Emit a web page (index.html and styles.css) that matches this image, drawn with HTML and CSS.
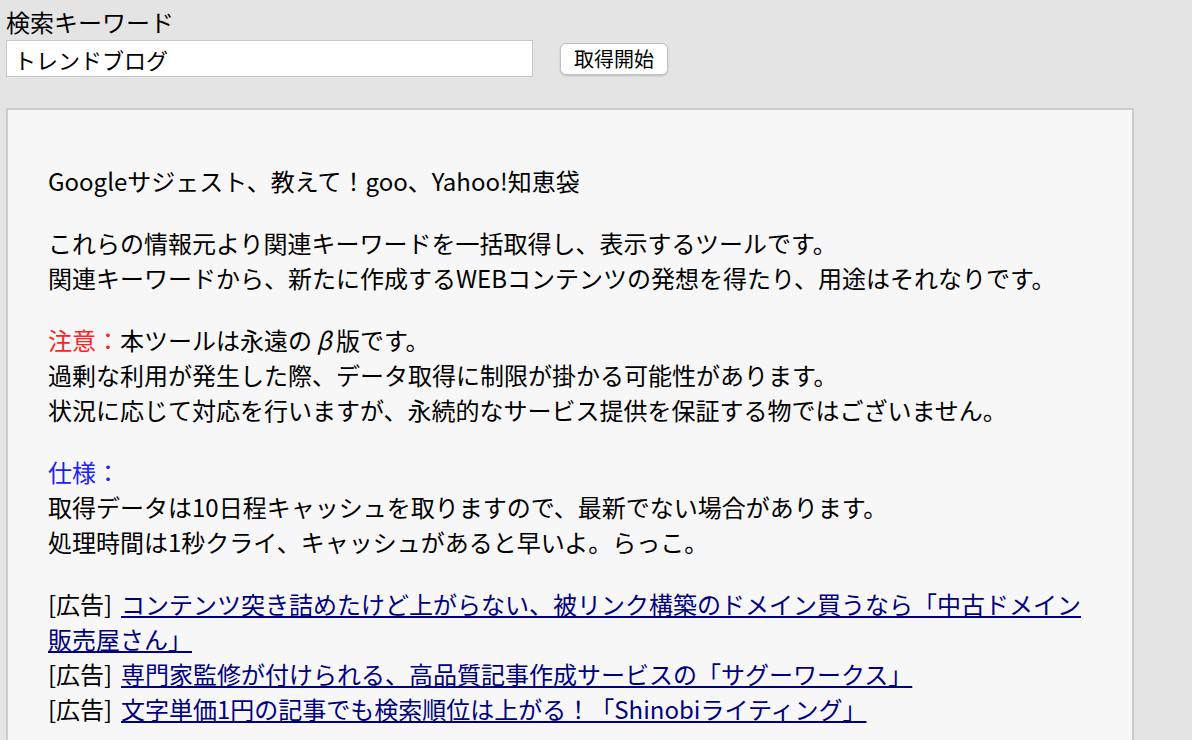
FILE: index.html
```html
<!DOCTYPE html>
<html lang="ja">
<head>
<meta charset="utf-8">
<title>関連キーワード取得ツール</title>
<link rel="stylesheet" href="styles.css">
</head>
<body>
<form class="search">
  <div class="label">検索キーワード</div>
  <div class="search-row">
    <input class="keyword" type="text" value="トレンドブログ">
    <button class="btn" type="button">取得開始</button>
  </div>
</form>
<div class="info">
  <p class="lead">Googleサジェスト、教えて！goo、Yahoo!知恵袋</p>
  <p>これらの情報元より関連キーワードを一括取得し、表示するツールです。<br>関連キーワードから、新たに作成するWEBコンテンツの発想を得たり、用途はそれなりです。</p>
  <p><span class="warn">注意：</span>本ツールは永遠の<span class="beta">β</span>版です。<br>過剰な利用が発生した際、データ取得に制限が掛かる可能性があります。<br>状況に応じて対応を行いますが、永続的なサービス提供を保証する物ではございません。</p>
  <p><span class="spec">仕様：</span><br>取得データは10日程キャッシュを取りますので、最新でない場合があります。<br>処理時間は1秒クライ、キャッシュがあると早いよ。らっこ。</p>
  <p class="ads"><span class="tag">[広告]</span><a href="#">コンテンツ突き詰めたけど上がらない、被リンク構築のドメイン買うなら「中古ドメイン販売屋さん」</a><br><span class="tag">[広告]</span><a href="#">専門家監修が付けられる、高品質記事作成サービスの「サグーワークス」</a><br><span class="tag">[広告]</span><a href="#">文字単価1円の記事でも検索順位は上がる！「Shinobiライティング」</a></p>
</div>
</body>
</html>
```

FILE: styles.css
```css
html, body {
  background: #e4e4e4;
}
body {
  margin: 0;
  padding: 6px;
  font-family: "Noto Sans CJK JP", "Noto Sans", sans-serif;
  font-size: 24px;
  color: #000;
}
.search {
  margin: 0;
}
.label {
  line-height: 32px;
}
.search-row {
  display: flex;
  align-items: center;
  gap: 27px;
  margin-top: 2px;
}
.keyword {
  box-sizing: border-box;
  width: 527px;
  height: 37px;
  margin: 0;
  padding: 0 7px;
  border: 1px solid #c6c6c6;
  background: #fff;
  font-family: "Noto Sans CJK JP", sans-serif;
  font-size: 22px;
  color: #000;
  outline: none;
}
.btn {
  box-sizing: border-box;
  width: 108px;
  height: 32px;
  margin: 0;
  padding: 0;
  border: 1px solid #c2c2c2;
  border-radius: 6px;
  background: #fff;
  box-shadow: 0 1px 2px rgba(0, 0, 0, 0.18);
  font-family: "Noto Sans CJK JP", sans-serif;
  font-size: 20px;
  line-height: 28px;
  color: #000;
}
.info {
  box-sizing: border-box;
  width: 1128px;
  margin-top: 31px;
  padding: 27px 40px 60px;
  border: 2px solid #cccccc;
  background: #f7f7f7;
}
.info p {
  margin: 27px 0 0;
  line-height: 35px;
}
.info p.lead {
  margin-top: 26px;
}
.warn {
  color: #ff2222;
}
.spec {
  color: #2020ff;
}
.beta {
  display: inline-block;
  width: 24px;
  text-align: center;
  font-style: italic;
}
.tag {
  display: inline-block;
  width: 73px;
}
.ads a {
  color: #000080;
  text-decoration: underline;
}
```
